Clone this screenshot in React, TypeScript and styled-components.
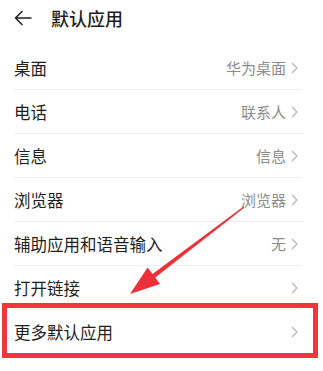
import React from "react";
import styled, { createGlobalStyle } from "styled-components";

const GlobalStyle = createGlobalStyle`
  html, body {
    margin: 0;
    padding: 0;
    background: #ffffff;
  }
  body {
    font-family: "Noto Sans CJK SC", "Noto Sans", sans-serif;
    color: #1c1c1c;
  }
`;

const Page = styled.div`
  position: relative;
  width: 323px;
  height: 371px;
  overflow: hidden;
  background: #fff;
`;

const Header = styled.div`
  display: flex;
  align-items: center;
  height: 36px;
  padding-left: 14px;
  gap: 19px;
`;

const Title = styled.h1`
  margin: 0;
  font-size: 18px;
  font-weight: 500;
  color: #1e1e1e;
`;

const List = styled.div`
  margin-top: 10px;
  padding: 0 21px 0 14px;
`;

const Row = styled.div<{ $last?: boolean }>`
  display: flex;
  align-items: center;
  justify-content: space-between;
  height: 44px;
  border-bottom: ${(p) => (p.$last ? "none" : "1px solid #eeeeee")};
  box-sizing: border-box;
`;

const Label = styled.span`
  font-size: 16.5px;
  color: #1e1e1e;
`;

const Right = styled.span`
  display: flex;
  align-items: center;
  gap: 5px;
  padding-right: 4px;
`;

const Value = styled.span`
  font-size: 15px;
  color: #8c8c8c;
`;

const Highlight = styled.div`
  position: absolute;
  left: 2px;
  top: 303px;
  width: 316px;
  height: 55px;
  box-sizing: border-box;
  border: 5px solid #f2353d;
`;

const Pointer = styled.svg`
  position: absolute;
  left: 0;
  top: 0;
  pointer-events: none;
`;

const Chevron = () => (
  <svg width="7" height="12" viewBox="0 0 7 12">
    <path d="M1 1 L6 6 L1 11" fill="none" stroke="#b3b3b3" strokeWidth="1.2" />
  </svg>
);

const BackArrow = () => (
  <svg width="18" height="16" viewBox="0 0 18 16">
    <path
      d="M17 8 H2 M8 1.5 L1.5 8 L8 14.5"
      fill="none"
      stroke="#222"
      strokeWidth="1.6"
      strokeLinecap="round"
      strokeLinejoin="round"
    />
  </svg>
);

const items: { label: string; value?: string }[] = [
  { label: "桌面", value: "华为桌面" },
  { label: "电话", value: "联系人" },
  { label: "信息", value: "信息" },
  { label: "浏览器", value: "浏览器" },
  { label: "辅助应用和语音输入", value: "无" },
  { label: "打开链接" },
  { label: "更多默认应用" },
];

export default function App() {
  return (
    <Page>
      <GlobalStyle />
      <Header>
        <BackArrow />
        <Title>默认应用</Title>
      </Header>
      <List>
        {items.map((it, i) => (
          <Row key={it.label} $last={i === items.length - 1}>
            <Label>{it.label}</Label>
            <Right>
              {it.value && <Value>{it.value}</Value>}
              <Chevron />
            </Right>
          </Row>
        ))}
      </List>
      <Highlight />
      <Pointer width="323" height="371" viewBox="0 0 323 371">
        <polygon
          points="244.5,207.6 155.3,277.6 160,284 130,294 147.6,267.6 152.5,274 243.5,206.4"
          fill="#ec3238"
        />
      </Pointer>
    </Page>
  );
}
